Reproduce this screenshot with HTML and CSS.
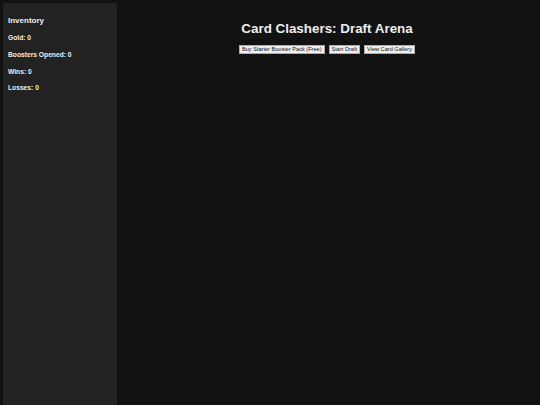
FILE: index.html
```html
<!DOCTYPE html>
<html lang="en">
<head>
    <meta charset="UTF-8">
    <meta name="viewport" content="width=device-width, initial-scale=1.0">
    <title>Card Clashers: Draft Arena</title>
    <link rel="stylesheet" href="styles.css">
</head>
<body>
    <div class="sidebar">
        <h2>Inventory</h2>
        <p>Gold: <span id="gold">0</span></p>
        <p>Boosters Opened: <span id="boosters">0</span></p>
        <p>Wins: <span id="wins">0</span></p>
        <p>Losses: <span id="losses">0</span></p>
    </div>

    <div class="main">
        <h1>Card Clashers: Draft Arena</h1>
        <div class="controls">
            <button>Buy Starter Booster Pack (Free)</button>
            <button>Start Draft</button>
            <button>View Card Gallery</button>
        </div>
    </div>
</body>
</html>
```

FILE: styles.css
```css
html, body {
    height: 100%;
}
body {
    font-family: "Liberation Sans", Arial, sans-serif;
    margin: 0;
    background-color: #121212;
    color: #eeeeee;
    display: flex;
}
.sidebar {
    width: 104px;
    margin: 3px 0 0 3px;
    padding: 0 5px;
    background: #222222;
    box-sizing: content-box;
}
.sidebar h2 {
    font-size: 8px;
    font-weight: bold;
    margin: 13px 0 9px;
    line-height: 9px;
}
.sidebar p {
    font-size: 6.7px;
    font-weight: bold;
    margin: 0 0 9.8px;
    line-height: 7px;
}
.main {
    flex: 1;
    padding-right: 3px;
    text-align: center;
}
h1 {
    font-size: 13.4px;
    line-height: 15px;
    margin: 21px 0 9px;
}
.controls {
    display: flex;
    justify-content: center;
    gap: 4px;
}
.controls button {
    font-family: "Liberation Sans", Arial, sans-serif;
    font-size: 5.6px;
    line-height: 7px;
    background: #efefef;
    color: #111;
    border: 1px solid #aaaaaa;
    padding: 0 2px;
    margin: 0;
}
```
